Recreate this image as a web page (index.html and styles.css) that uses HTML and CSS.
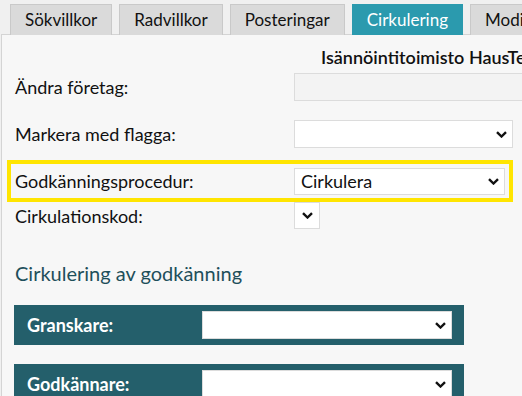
FILE: index.html
```html
<!DOCTYPE html>
<html lang="sv">
<head>
<meta charset="utf-8">
<link rel="stylesheet" href="styles.css">
</head>
<body>
<div class="tabs">
  <div class="tab">Sökvillkor</div>
  <div class="tab">Radvillkor</div>
  <div class="tab">Posteringar</div>
  <div class="tab active">Cirkulering</div>
  <div class="tab">Modifiera</div>
</div>
<div class="panel">
  <div class="row company-row">
    <div class="label"></div>
    <div class="company">Isännöintitoimisto HausTeam Oy</div>
  </div>
  <div class="row row-input">
    <div class="label">Ändra företag:</div>
    <div class="input disabled"></div>
  </div>
  <div class="row row-flag">
    <div class="label">Markera med flagga:</div>
    <div class="select">
      <span class="value"></span>
      <svg class="chev" width="11" height="7" viewBox="0 0 11 7"><path d="M1 1.2 L5.5 5.5 L10 1.2" fill="none" stroke="#111" stroke-width="2.4"/></svg>
    </div>
  </div>
  <div class="row highlight">
    <div class="label">Godkänningsprocedur:</div>
    <div class="select narrow">
      <span class="value">Cirkulera</span>
      <svg class="chev" width="11" height="7" viewBox="0 0 11 7"><path d="M1 1.2 L5.5 5.5 L10 1.2" fill="none" stroke="#111" stroke-width="2.4"/></svg>
    </div>
  </div>
  <div class="row row-code">
    <div class="label">Cirkulationskod:</div>
    <div class="select tiny">
      <svg class="chev" width="11" height="7" viewBox="0 0 11 7"><path d="M1 1.2 L5.5 5.5 L10 1.2" fill="none" stroke="#111" stroke-width="2.4"/></svg>
    </div>
  </div>
  <h2 class="section-title">Cirkulering av godkänning</h2>
  <div class="bar">
    <div class="bar-label">Granskare:</div>
    <div class="select bar-select">
      <span class="value"></span>
      <svg class="chev" width="11" height="7" viewBox="0 0 11 7"><path d="M1 1.2 L5.5 5.5 L10 1.2" fill="none" stroke="#111" stroke-width="2.4"/></svg>
    </div>
  </div>
  <div class="bar">
    <div class="bar-label">Godkännare:</div>
    <div class="select bar-select">
      <span class="value"></span>
      <svg class="chev" width="11" height="7" viewBox="0 0 11 7"><path d="M1 1.2 L5.5 5.5 L10 1.2" fill="none" stroke="#111" stroke-width="2.4"/></svg>
    </div>
  </div>
</div>
</body>
</html>
```
FILE: styles.css
```css
html, body {
  margin: 0;
  padding: 0;
  background: #f0f0f0;
  font-family: Lato, "Noto Sans", sans-serif;
  font-size: 18px;
  color: #111;
  overflow: hidden;
  width: 522px;
  height: 396px;
}

.tabs {
  display: flex;
  padding: 4px 0 0 10px;
  gap: 7px;
  height: 30px;
  white-space: nowrap;
}

.tab {
  box-sizing: border-box;
  height: 31px;
  padding: 0 14px;
  background: #dadada;
  border: 1px solid #c9c9c9;
  border-bottom: none;
  line-height: 30px;
  font-size: 17px;
  flex: none;
}

.tab.active {
  background: #2b9aae;
  border-color: #2b9aae;
  color: #fff;
}

.panel {
  margin-left: 1px;
  border-left: 1px solid #d4d4d4;
  border-top: 1px solid #d4d4d4;
  background: #f7f7f7;
  padding: 0 0 0 5px;
  height: 400px;
}

.row {
  display: flex;
  align-items: center;
  width: 506px;
  box-sizing: border-box;
  padding-left: 8px;
}

.label {
  width: 279px;
  flex: none;
  white-space: nowrap;
}

.company-row {
  height: 38px;
  padding-top: 6px;
  width: 516px;
}

.company {
  margin-left: 27px;
  white-space: nowrap;
  overflow: hidden;
  flex: 1;
  font-weight: 600;
  font-size: 18px;
  color: #111;
}

.row-input {
  height: 28px;
}

.input {
  flex: none;
  width: 236px;
  height: 28px;
  box-sizing: border-box;
  border: 1px solid #dcdcdc;
  background: #f3f3f3;
}

.row-flag {
  margin-top: 19px;
  height: 28px;
}

.select {
  flex: none;
  width: 219px;
  height: 28px;
  box-sizing: border-box;
  border: 1px solid #dcdcdc;
  background: #fff;
  display: flex;
  align-items: center;
  justify-content: space-between;
  padding: 0 5px 0 6px;
}

.select .chev {
  flex: none;
  margin-left: auto;
}

.highlight {
  margin-top: 12px;
  height: 42px;
  border: 4px solid #ffe500;
  padding-left: 4px;
}

.select.narrow {
  width: 211px;
  height: 27px;
}

.row-code {
  height: 27px;
}

.select.tiny {
  width: 26px;
  height: 27px;
  padding: 0;
  justify-content: center;
}

.select.tiny .chev {
  margin: 0;
}

.section-title {
  margin: 32px 0 0 8px;
  font-size: 20px;
  font-weight: 400;
  color: #1e4f5b;
  line-height: 24px;
}

.bar {
  display: flex;
  align-items: center;
  margin: 20px 0 0 7px;
  width: 450px;
  height: 40px;
  box-sizing: border-box;
  background: #245f6b;
  padding: 0 12px 0 13px;
}

.bar + .bar {
  margin-top: 19px;
}

.bar-label {
  color: #fff;
  font-weight: 700;
  width: 175px;
  flex: none;
  white-space: nowrap;
}

.bar-select {
  width: 250px;
  margin-left: auto;
}
```
